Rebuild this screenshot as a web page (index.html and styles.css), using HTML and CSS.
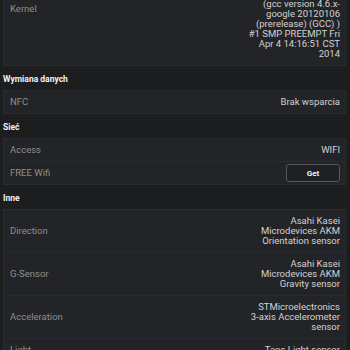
FILE: index.html
```html
<!DOCTYPE html>
<html lang="pl">
<head>
    <meta charset="UTF-8">
    <meta name="viewport" content="width=device-width, initial-scale=1.0">
    <title>Informacje o urządzeniu</title>
    <link rel="stylesheet" href="styles.css">
</head>
<body>
    <div class="page">
        <div class="card">
            <div class="row">
                <span class="label">Kernel</span>
                <span class="value">3.4.0-perf-g2f6e0a1<br>(build@ubuntu-vm)<br>android-build@host<br>Linux version 3.4.0<br>(gcc version 4.6.x-<br>google 20120106<br>(prerelease) (GCC) )<br>#1 SMP PREEMPT Fri<br>Apr 4 14:16:51 CST<br>2014</span>
            </div>
        </div>

        <h2 class="section-title">Wymiana danych</h2>
        <div class="card">
            <div class="row">
                <span class="label">NFC</span>
                <span class="value">Brak wsparcia</span>
            </div>
        </div>

        <h2 class="section-title">Sieć</h2>
        <div class="card">
            <div class="row">
                <span class="label">Access</span>
                <span class="value">WIFI</span>
            </div>
            <div class="row row-button">
                <span class="label">FREE Wifi</span>
                <button class="get-button">Get</button>
            </div>
        </div>

        <h2 class="section-title">Inne</h2>
        <div class="card">
            <div class="row">
                <span class="label">Direction</span>
                <span class="value">Asahi Kasei<br>Microdevices AKM<br>Orientation sensor</span>
            </div>
            <div class="row">
                <span class="label">G-Sensor</span>
                <span class="value">Asahi Kasei<br>Microdevices AKM<br>Gravity sensor</span>
            </div>
            <div class="row">
                <span class="label">Acceleration</span>
                <span class="value">STMicroelectronics<br>3-axis Accelerometer<br>sensor</span>
            </div>
            <div class="row">
                <span class="label">Light</span>
                <span class="value">Taos Light sensor</span>
            </div>
        </div>
    </div>
</body>
</html>
```

FILE: styles.css
```css
/* Global styles */
body {
    font-family: Roboto, "Noto Sans", sans-serif;
    margin: 0;
    background-color: #1c1d1f;
    overflow: hidden;
}
.page {
    margin-top: -48px;
    padding: 0 4px 0 3px;
}
.section-title {
    margin: 0;
    padding: 7px 0 5px;
    font-size: 8.5px;
    line-height: 12px;
    font-weight: bold;
    color: #f2f2f2;
}
.card {
    background-color: #232427;
    border: 1px solid #2a2b2e;
}
.row {
    display: flex;
    justify-content: space-between;
    align-items: center;
    padding: 6px 5px 6px 6px;
    font-size: 9.5px;
    line-height: 10px;
}
.row + .row {
    border-top: 1px solid #2a2b2e;
}
.label {
    color: #8e8e8e;
}
.value {
    color: #d2d2d2;
    text-align: right;
    white-space: nowrap;
}
.row-button {
    padding-top: 2px;
    padding-bottom: 2px;
}
.get-button {
    width: 54px;
    height: 18px;
    padding: 0;
    background-color: #1f2022;
    border: 1px solid #56575a;
    border-radius: 3px;
    color: #f2f2f2;
    font-family: Roboto, "Noto Sans", sans-serif;
    font-size: 8px;
    font-weight: bold;
}
```
